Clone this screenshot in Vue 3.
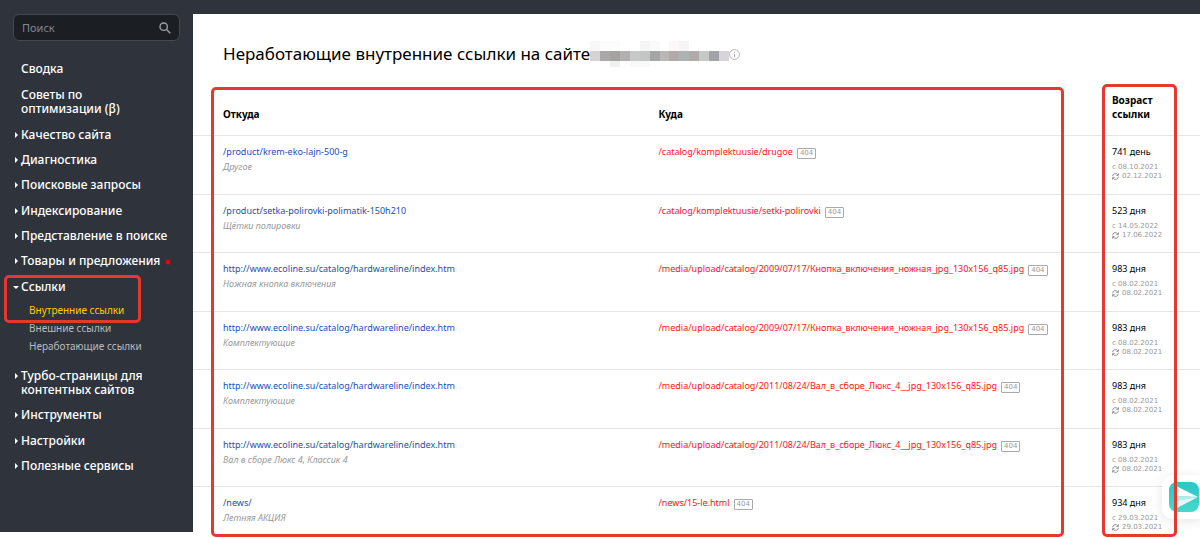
<script setup>
const menu = [
  { text: 'Сводка' },
  { text: 'Советы по оптимизации\u00a0(β)' },
  { text: 'Качество сайта', arrow: true },
  { text: 'Диагностика', arrow: true },
  { text: 'Поисковые запросы', arrow: true },
  { text: 'Индексирование', arrow: true },
  { text: 'Представление в поиске', arrow: true },
  { text: 'Товары и предложения', arrow: true, dot: true },
  { text: 'Ссылки', arrow: true, open: true, children: ['Внутренние ссылки', 'Внешние ссылки', 'Неработающие ссылки'] },
  { text: 'Турбо-страницы для контентных сайтов', arrow: true },
  { text: 'Инструменты', arrow: true },
  { text: 'Настройки', arrow: true },
  { text: 'Полезные сервисы', arrow: true },
]
const eco = 'http://www.ecoline.su/catalog/hardwareline/index.htm'
const knop = '/media/upload/catalog/2009/07/17/Кнопка_включения_ножная_jpg_130x156_q85.jpg'
const val = '/media/upload/catalog/2011/08/24/Вал_в_сборе_Люкс_4__jpg_130x156_q85.jpg'
const rows = [
  { from: '/product/krem-eko-lajn-500-g', note: 'Другое', to: '/catalog/komplektuusie/drugoe', age: '741 день', since: '08.10.2021', checked: '02.12.2021' },
  { from: '/product/setka-polirovki-polimatik-150h210', note: 'Щётки полировки', to: '/catalog/komplektuusie/setki-polirovki', age: '523 дня', since: '14.05.2022', checked: '17.06.2022' },
  { from: eco, note: 'Ножная кнопка включения', to: knop, age: '983 дня', since: '08.02.2021', checked: '08.02.2021' },
  { from: eco, note: 'Комплектующие', to: knop, age: '983 дня', since: '08.02.2021', checked: '08.02.2021' },
  { from: eco, note: 'Комплектующие', to: val, age: '983 дня', since: '08.02.2021', checked: '08.02.2021' },
  { from: eco, note: 'Вал в сборе Люкс 4, Классик 4', to: val, age: '983 дня', since: '08.02.2021', checked: '08.02.2021' },
  { from: '/news/', note: 'Летняя АКЦИЯ', to: '/news/15-le.html', age: '934 дня', since: '29.03.2021', checked: '29.03.2021' },
]
// [column, row, width, colour] of the hidden host name, in 10px blocks
const mosaic = [
  [0, 0, 1, '#f8f8f8'], [1, 0, 2, '#fcfcfc'], [5, 0, 1, '#f6f5f5'], [6, 0, 1, '#fafafa'], [8, 0, 1, '#fbf8f7'], [9, 0, 1, '#f5f5f7'],
  [0, 1, 1, '#d5d4d5'], [1, 1, 1, '#aaa8a8'], [2, 1, 1, '#a5a3a2'], [3, 1, 1, '#b2b0b0'], [4, 1, 1, '#c7c9c9'], [5, 1, 1, '#c3c5c5'],
  [6, 1, 1, '#a5a5a7'], [7, 1, 1, '#bab8b7'], [8, 1, 1, '#b1a9aa'], [9, 1, 1, '#abb4b2'], [10, 1, 1, '#afabab'], [11, 1, 1, '#c8c8c9'],
  [12, 1, 1, '#a2a3a8'], [13, 1, 1, '#d6d4d8'], [2, 2, 1, '#eef1f0'], [4, 2, 2, '#f9f9f9'],
]
</script>

<template>
  <div class="page">
    <aside class="sidebar">
      <label class="search">
        <input type="text" placeholder="Поиск" aria-label="Поиск" />
        <svg width="12" height="12" viewBox="0 0 12 12" fill="none" stroke="#9b9ea1" stroke-width="1.4">
          <circle cx="4.7" cy="4.7" r="3.7" /><path d="M7.5 7.5 11.3 11.3" />
        </svg>
      </label>
      <ul class="menu">
        <li v-for="item in menu" :key="item.text" class="item">
          <a href="#" class="entry" :class="{ arrow: item.arrow, open: item.open }">{{ item.text }}<svg v-if="item.dot" class="dot" width="6" height="6" viewBox="0 0 6 6"><circle cx="3" cy="3" r="2.5" fill="#e8000b" /></svg></a>
          <ul v-if="item.children" class="sub">
            <li v-for="(c, i) in item.children" :key="c"><a href="#" :class="{ active: i === 0 }">{{ c }}</a></li>
          </ul>
          <span v-if="item.children" class="mark mark-menu"></span>
        </li>
      </ul>
    </aside>
    <main class="content">
      <h1>
        Неработающие внутренние ссылки на сайте<svg class="mosaic" width="139" height="26" viewBox="0 0 14 26" preserveAspectRatio="none" shape-rendering="crispEdges">
          <rect v-for="(b, i) in mosaic" :key="i" :x="b[0]" :y="[0, 10, 20][b[1]]" :width="b[2]" :height="b[1] === 2 ? 6 : 10" :fill="b[3]" />
        </svg>
        <svg class="info" width="11" height="11" viewBox="0 0 11 11" fill="none" stroke="#b4b4b4">
          <circle cx="5.5" cy="5.5" r="4.9" /><path d="M5.5 4.8V8.2M5.5 2.7V3.8" />
        </svg>
      </h1>
      <div class="report">
        <table>
          <thead>
            <tr><th scope="col">Откуда</th><th scope="col">Куда</th><th scope="col">Возраст ссылки</th></tr>
          </thead>
          <tbody>
            <tr v-for="(r, i) in rows" :key="i">
              <td><a href="#">{{ r.from }}</a><div class="note">{{ r.note }}</div></td>
              <td><a href="#" class="broken">{{ r.to }}</a><span class="code">404</span></td>
              <td>
                <div class="age">{{ r.age }}</div>
                <div class="date">с {{ r.since }}</div>
                <div class="date">
                  <svg width="7" height="7" viewBox="0 0 7 7" fill="none" stroke="#858585" stroke-width="0.9">
                    <path d="M.6 3.2A2.8 2.8 0 0 1 5.8 2M6.4 .4V2.4H4.4M6.4 3.8A2.8 2.8 0 0 1 1.2 5M.6 6.6V4.6H2.6" />
                  </svg>{{ r.checked }}
                </div>
              </td>
            </tr>
          </tbody>
        </table>
        <button class="chat" aria-label="Написать сообщение">
          <svg width="30" height="30" viewBox="0 0 30 30">
            <defs><linearGradient id="chatFill" x1="0" y1="0" x2="0" y2="1"><stop offset="0" stop-color="#2fc4c6" /><stop offset="1" stop-color="#45d9cb" /></linearGradient></defs>
            <rect width="30" height="30" rx="8" fill="url(#chatFill)" />
            <path d="M7 4 29 15 5 14Z" fill="#fff" />
            <path d="M5 14 29 15 6 19Z" fill="#b5ecea" />
            <path d="M6 19 29 15 8 26Z" fill="#e6f9f8" />
          </svg>
        </button>
        <span class="mark mark-links"></span>
        <span class="mark mark-age"></span>
      </div>
    </main>
  </div>
</template>

<style>
body { margin: 0; background: #fff; }
</style>

<style scoped>
.page { display: flex; align-items: flex-start; border-top: 14px solid #2f343c; font-family: "Noto Sans", "Open Sans", sans-serif; font-size: 9px; color: #000; height: calc(100vh - 14px); overflow: hidden; }
a { text-decoration: none; }
ul { list-style: none; margin: 0; padding: 0; }
.sidebar { flex: 0 0 193px; width: 193px; min-width: 0; box-sizing: border-box; height: calc(100vh - 20px); background: #2f343c; }
.search { display: flex; align-items: center; margin: 0 13px; height: 25px; padding: 0 8px; border: 1px solid #434855; border-radius: 6px; background: #1b1f23; }
.search input { flex: 1; width: 0; min-width: 0; padding: 0; border: 0; outline: 0; background: none; font: inherit; font-size: 11px; color: #fff; }
.search input::placeholder { color: #7e8596; opacity: 1; }
.menu { padding: 21px 16px 0 21px; display: flex; flex-direction: column; gap: 11px; }
.item { position: relative; }
.item:first-child, .item:nth-child(3n + 2) { padding-bottom: 1px; }
.entry { display: block; position: relative; font-size: 12px; line-height: 14px; font-weight: 500; color: #fff; }
.entry.arrow::before { content: ""; position: absolute; left: -6px; top: 4px; border: 3px solid transparent; border-left-color: #fff; border-right: 0; }
.entry.open::before { left: -8px; top: 6px; border: 3px solid transparent; border-top-color: #fff; border-bottom: 0; }
.dot { margin-left: 5px; }
.sub { padding: 7px 0 3px 8px; font-size: 10px; line-height: 18px; }
.sub a { color: #b9bbbe; }
.sub a.active { color: #ffcc00; }
.mark { position: absolute; box-sizing: border-box; border: 3px solid #e6392d; border-radius: 5px; pointer-events: none; }
.mark-menu { left: -17px; top: -5px; width: 137px; height: 48px; }
.content { flex: 1; min-width: 0; }
h1 { display: flex; align-items: center; margin: 0; padding: 26px 0 0 30px; height: 28px; font-size: 17px; font-weight: 400; line-height: 28px; white-space: nowrap; }
.report { position: relative; margin-top: 19px; }
table { width: 100%; table-layout: fixed; border-collapse: collapse; }
th { box-sizing: border-box; height: 48px; padding: 6px 0 0; font-size: 10px; line-height: 14px; text-align: left; vertical-align: middle; }
th:nth-child(3) { width: 88px; padding: 0 40px 8px 0; }
td { box-sizing: border-box; height: 59px; padding: 9px 0 0; border-top: 1px solid #e6e6e6; line-height: 14px; vertical-align: top; white-space: nowrap; }
tbody tr:nth-child(even) td { height: 58px; }
th:nth-child(1), td:nth-child(1) { padding-left: 30px; }
th:nth-child(2), td:nth-child(2) { padding-left: 6px; }
td a { color: #1a4fb8; }
td a.broken { color: #ff1414; }
.note { margin-top: 1px; font-style: italic; color: #999; }
.code { display: inline-block; margin-left: 4px; padding: 0 2px; border: 1px solid #aaa; border-radius: 1px; font: 7px/9px "DejaVu Sans", sans-serif; color: #999; }
.age { margin-bottom: 4px; }
.date { display: flex; align-items: center; gap: 3px; font: 7px/9px "DejaVu Sans", sans-serif; color: #999; }
.mark-links { left: 18px; right: 136px; top: 0; height: 450px; }
.mark-age { right: 23px; width: 75px; top: -3px; height: 453px; }
.chat { position: absolute; right: -6px; top: 388px; width: 44px; height: 44px; padding: 7px; border: 0; border-radius: 10px; background: #fff; box-shadow: 0 2px 12px rgba(0, 0, 0, .1); }
.chat svg { display: block; }
</style>
